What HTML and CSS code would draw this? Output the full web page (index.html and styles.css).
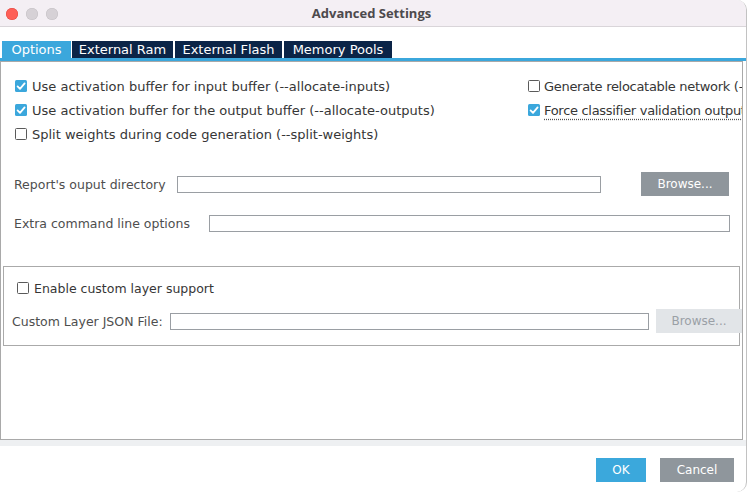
FILE: index.html
```html
<!DOCTYPE html>
<html>
<head>
<meta charset="utf-8">
<title>Advanced Settings</title>
<link rel="stylesheet" href="styles.css">
</head>
<body>
<div class="window">
  <header class="titlebar">
    <div class="lights"><span class="light red"></span><span class="light"></span><span class="light"></span></div>
    <div class="title">Advanced Settings</div>
    <div></div>
  </header>
  <nav class="tabs">
    <div class="tab tab-options active">Options</div>
    <div class="tab tab-ram">External Ram</div>
    <div class="tab tab-flash">External Flash</div>
    <div class="tab tab-pools">Memory Pools</div>
  </nav>
  <div class="tabline"></div>
  <main class="panel">
    <div class="options">
      <div class="col">
        <label class="check"><span class="box on"><svg viewBox="0 0 12 12" width="12" height="12"><path d="M2.6 6.4 L5 8.8 L9.6 3.4" fill="none" stroke="#fff" stroke-width="1.8" stroke-linecap="round" stroke-linejoin="round"/></svg></span>Use activation buffer for input buffer (--allocate-inputs)</label>
        <label class="check"><span class="box on"><svg viewBox="0 0 12 12" width="12" height="12"><path d="M2.6 6.4 L5 8.8 L9.6 3.4" fill="none" stroke="#fff" stroke-width="1.8" stroke-linecap="round" stroke-linejoin="round"/></svg></span>Use activation buffer for the output buffer (--allocate-outputs)</label>
        <label class="check"><span class="box"></span>Split weights during code generation (--split-weights)</label>
      </div>
      <div class="col col-right">
        <label class="check"><span class="box"></span>Generate relocatable network (--relocatable)</label>
        <label class="check"><span class="box on"><svg viewBox="0 0 12 12" width="12" height="12"><path d="M2.6 6.4 L5 8.8 L9.6 3.4" fill="none" stroke="#fff" stroke-width="1.8" stroke-linecap="round" stroke-linejoin="round"/></svg></span><span class="tip">Force classifier validation output</span></label>
      </div>
    </div>

    <div class="field-row report-row">
      <span class="label label-report">Report's ouput directory</span>
      <span class="input input-report"></span>
      <span class="btn btn-browse">Browse...</span>
    </div>

    <div class="field-row extra-row">
      <span class="label label-extra">Extra command line options</span>
      <span class="input input-extra"></span>
    </div>

    <section class="group">
      <label class="check group-check"><span class="box"></span>Enable custom layer support</label>
      <div class="field-row custom-row">
        <span class="label label-custom">Custom Layer JSON File:</span>
        <span class="input input-custom"></span>
        <span class="btn btn-disabled">Browse...</span>
      </div>
    </section>
  </main>
  <div class="band"></div>
  <footer class="footer">
    <span class="btn btn-ok">OK</span>
    <span class="btn btn-cancel">Cancel</span>
  </footer>
</div>
</body>
</html>
```

FILE: styles.css
```css
* { box-sizing: border-box; }

body {
  margin: 0;
  background: #ffffff;
  font-family: "DejaVu Sans", "Liberation Sans", sans-serif;
  color: #333333;
}

.window {
  width: 747px;
  height: 492px;
  border-right: 1px solid #c2c2c2;
  border-radius: 0 10px 10px 0;
  overflow: hidden;
  display: flex;
  flex-direction: column;
  background: #ffffff;
}

.titlebar {
  height: 27px;
  flex: none;
  background: #f4eff4;
  border-bottom: 1px solid #d9d5d9;
  display: grid;
  grid-template-columns: 1fr auto 1fr;
  align-items: center;
}

.lights {
  display: flex;
  gap: 8px;
  padding-left: 6px;
  padding-top: 1px;
}

.light {
  width: 12px;
  height: 12px;
  border-radius: 50%;
  background: #d6d1d6;
  box-shadow: inset 0 0 0 0.5px #c4bfc4;
}

.light.red {
  background: #fe5f57;
  box-shadow: inset 0 0 0 0.5px #e2463f;
}

.title {
  font-family: "Open Sans", "DejaVu Sans", sans-serif;
  font-weight: 700;
  font-size: 13px;
  color: #4d4a4d;
  margin-left: -3px;
}

.tabs {
  flex: none;
  display: flex;
  margin-top: 14px;
  height: 17px;
  padding-left: 2px;
}

.tab {
  height: 17px;
  line-height: 17px;
  font-size: 13px;
  color: #ffffff;
  background: #0b2447;
  text-align: center;
}

.tab.active { background: #3ba7dc; }
.tab-options { width: 69px; }
.tab-ram { width: 101px; margin-left: 1px; }
.tab-flash { width: 107px; margin-left: 2px; }
.tab-pools { width: 108px; margin-left: 2px; }

.tabline {
  flex: none;
  height: 3px;
  background: #3ba7dc;
}

.panel {
  flex: none;
  width: 743px;
  height: 379px;
  border: 1px solid #a9a9a9;
  overflow: hidden;
  padding-top: 12px;
}

.options {
  display: grid;
  grid-template-columns: 513px 1fr;
  padding-left: 14px;
}

.col { display: flex; flex-direction: column; min-width: 0; }
.col-right { overflow: hidden; }
.col-right .check { letter-spacing: -0.3px; gap: 4px; }

.check {
  display: flex;
  align-items: center;
  gap: 5px;
  height: 24px;
  font-size: 13px;
  color: #363636;
  white-space: nowrap;
}

.box {
  flex: none;
  width: 12px;
  height: 12px;
  border: 1px solid #5a5a5a;
  border-radius: 1.5px;
  background: #ffffff;
  display: flex;
}

.box.on {
  border: none;
  background: #3ba7dc;
}

.tip {
  text-decoration: underline dotted #555;
  text-underline-offset: 4px;
}

.field-row {
  display: flex;
  align-items: center;
}

.label {
  flex: none;
  font-size: 12.5px;
  color: #4e4e4e;
  white-space: nowrap;
}

.input {
  flex: none;
  height: 17px;
  border: 1px solid #9a9ea3;
  background: #ffffff;
}

.btn {
  flex: none;
  height: 24px;
  display: flex;
  align-items: center;
  justify-content: center;
  font-size: 12px;
  color: #ffffff;
  background: #8f969c;
}

.report-row {
  margin-top: 26px;
  height: 24px;
  padding-left: 13px;
}
.label-report { width: 163px; }
.input-report { width: 424px; }
.btn-browse { width: 88px; margin-left: 40px; }

.extra-row {
  margin-top: 19px;
  height: 17px;
  padding-left: 13px;
}
.label-extra { width: 195px; }
.input-extra { width: 521px; }

.group {
  margin: 34px 0 0 2px;
  width: 737px;
  border: 1px solid #aaaaaa;
  padding: 11px 0 12px 0;
}

.group-check {
  height: 20px;
  padding-left: 13px;
  font-size: 12.5px;
}

.custom-row {
  margin-top: 11px;
  height: 24px;
  padding-left: 8px;
}
.label-custom { width: 158px; }
.input-custom { width: 479px; }
.btn-disabled {
  width: 86px;
  margin-left: 7px;
  background: #e2e5e8;
  color: #9aa0a6;
}

.band {
  flex: none;
  height: 6px;
  background: #eef0f2;
}

.footer {
  flex: 1;
  display: flex;
  justify-content: flex-end;
  align-items: flex-start;
  gap: 14px;
  padding: 12px 12px 0 0;
}

.btn-ok { width: 50px; background: #3ba8dc; }
.btn-cancel { width: 74px; }
```
